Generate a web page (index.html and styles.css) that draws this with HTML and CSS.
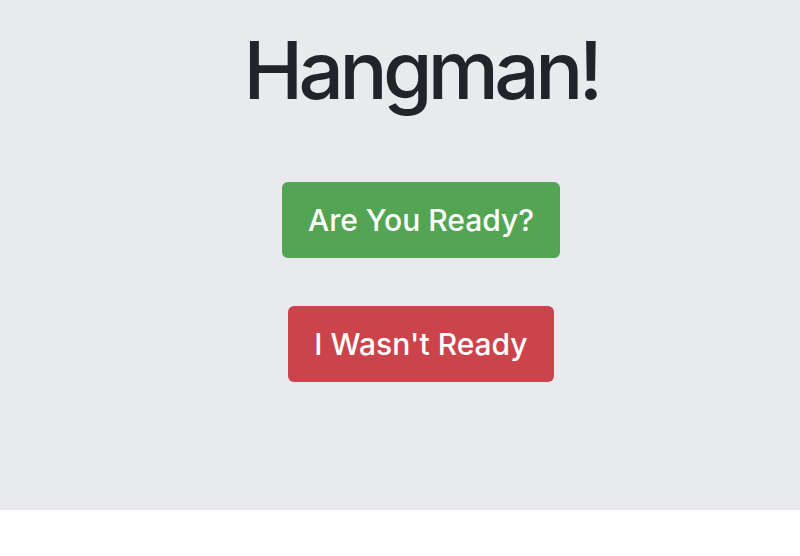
FILE: index.html
```html
<!DOCTYPE html>
<html>
<head>
<meta charset="utf-8">
<link rel="stylesheet" href="styles.css">
</head>
<body>
<div class="jumbotron">
  <h1 class="title">Hangman!</h1>
  <div class="actions">
    <button class="btn btn-success">Are You Ready?</button>
    <button class="btn btn-danger">I Wasn't Ready</button>
  </div>
</div>
</body>
</html>
```
FILE: styles.css
```css
html, body {
  margin: 0;
  padding: 0;
  background: #ffffff;
  font-family: Inter, "Liberation Sans", sans-serif;
}
.jumbotron {
  background: #e9eaee;
  height: 510px;
  box-sizing: border-box;
  padding: 22px 0 0 42px;
  display: flex;
  flex-direction: column;
  align-items: center;
}
.title {
  margin: 0;
  font-size: 80px;
  font-weight: 500;
  line-height: 96px;
  color: #212529;
  letter-spacing: -4.6px;
}
.actions {
  margin-top: 64px;
  display: flex;
  flex-direction: column;
  align-items: center;
  gap: 48px;
}
.btn {
  border: none;
  border-radius: 6px;
  color: #ffffff;
  font-family: Inter, "Liberation Sans", sans-serif;
  font-size: 30px;
  font-weight: 500;
  line-height: 76px;
  height: 76px;
  padding: 0 26px;
  cursor: pointer;
}
.btn-success {
  background: #53a453;
}
.btn-danger {
  background: #cb444b;
}
```
